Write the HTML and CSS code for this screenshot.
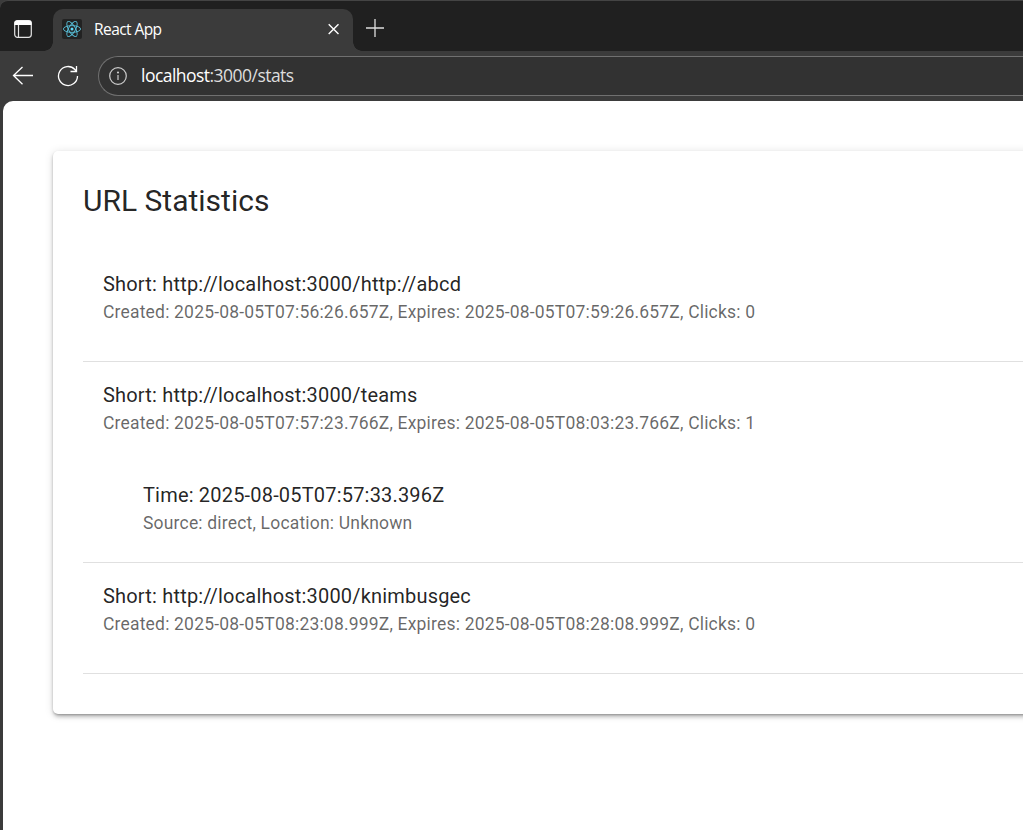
FILE: index.html
```html
<!DOCTYPE html>
<html lang="en">
<head>
<meta charset="utf-8">
<title>React App</title>
<link rel="stylesheet" href="styles.css">
</head>
<body>
<div class="browser">
  <header class="tabstrip">
    <svg class="tab-actions" width="20" height="20" viewBox="0 0 20 20" fill="none" stroke="#e4e4e4" stroke-width="1.2"><rect x="1.700" y="1.700" width="16.600" height="16.600" rx="2.800"/><path d="M2 3.500q0-1.500 1.500-1.500h13q1.500 0 1.500 1.500v2H2z" fill="#fff" stroke="#fff"/><path d="M5.500 6v12"/></svg>
    <div class="tab">
      <svg class="favicon" width="20" height="20" viewBox="0 0 20 20"><rect width="20" height="20" rx="2" fill="#222"/><g fill="none" stroke="#58bfd8" stroke-width=".9"><ellipse cx="10" cy="10" rx="8.600" ry="3.400"/><ellipse cx="10" cy="10" rx="8.600" ry="3.400" transform="rotate(60 10 10)"/><ellipse cx="10" cy="10" rx="8.600" ry="3.400" transform="rotate(120 10 10)"/></g><circle cx="10" cy="10" r="1.500" fill="#61dafb"/></svg>
      <span class="tab-title">React App</span>
      <svg class="close" width="12" height="12" viewBox="0 0 12 12" stroke="#fff" stroke-width="1.400"><path d="M.7 1.200l9.800 9.800M10.500 1.200L.7 11"/></svg>
    </div>
    <svg class="new-tab" width="18" height="18" viewBox="0 0 18 18" stroke="#ddd" stroke-width="1.300"><path d="M9 0v18M0 9h18"/></svg>
  </header>
  <nav class="toolbar">
    <svg class="back" width="22" height="20" viewBox="0 0 22 20" fill="none" stroke="#fff" stroke-width="1.300"><path d="M21 9.500H1.500M10.500 1L1.500 9.500l9 8.700"/></svg>
    <svg class="reload" width="22" height="22" viewBox="0 0 22 22" fill="none" stroke="#fff" stroke-width="1.300"><path d="M20.500 11a9.500 9.500 0 1 1-2.600-6.500l1.600 2M19.500 1v5.500h-6"/></svg>
    <div class="address">
      <svg width="18" height="18" viewBox="0 0 18 18" fill="none" stroke="#ccc" stroke-width="1.200"><circle cx="9" cy="9" r="8.300"/><path d="M9 8v5"/><circle cx="9" cy="5.500" r=".5" fill="#ccc"/></svg>
      <span class="url"><span class="host">localhost</span>:3000/stats</span>
    </div>
  </nav>
  <main class="page">
    <section class="card">
      <h1 class="title">URL Statistics</h1>
      <ul class="list">
        <li class="entry"><p class="primary">Short: http://localhost:3000/http://abcd</p><p class="secondary">Created: 2025-08-05T07:56:26.657Z, Expires: 2025-08-05T07:59:26.657Z, Clicks: 0</p></li>
        <li class="entry with-click"><p class="primary">Short: http://localhost:3000/teams</p><p class="secondary">Created: 2025-08-05T07:57:23.766Z, Expires: 2025-08-05T08:03:23.766Z, Clicks: 1</p>
          <div class="click"><p class="primary">Time: 2025-08-05T07:57:33.396Z</p><p class="secondary">Source: direct, Location: Unknown</p></div></li>
        <li class="entry"><p class="primary">Short: http://localhost:3000/knimbusgec</p><p class="secondary">Created: 2025-08-05T08:23:08.999Z, Expires: 2025-08-05T08:28:08.999Z, Clicks: 0</p></li>
      </ul>
    </section>
  </main>
</div>
</body>
</html>
```
FILE: styles.css
```css
* { box-sizing: border-box; }
body { margin: 0; font-family: Roboto, "Liberation Sans", sans-serif; background: #3b3b3b; overflow: hidden; }
p, h1, ul { margin: 0; padding: 0; }
svg { display: block; flex: none; }
.browser { width: 1023px; height: 830px; display: flex; flex-direction: column; overflow: hidden; }
.tabstrip { height: 51px; flex: none; display: flex; background: #202020; border-top: 1px solid #444; border-top-left-radius: 8px; padding: 8px 0 0 13px; }
.tab-actions { margin-top: 10px; }
.tab { position: relative; width: 300px; height: 42px; margin-left: 20px; padding: 0 13px 2px 9px; background: #3b3b3b; border-radius: 10px 10px 0 0; display: flex; align-items: center; }
.tab::before, .tab::after { content: ""; position: absolute; bottom: 0; width: 9px; height: 9px; }
.tab::before { left: -9px; background: radial-gradient(circle at 0 0, transparent 8.5px, #3b3b3b 9px); }
.tab::after { right: -9px; background: radial-gradient(circle at 100% 0, transparent 8.5px, #3b3b3b 9px); }
.tab-title { font: 15.5px "Open Sans", sans-serif; letter-spacing: -.57px; color: #fff; margin-left: 12px; flex: 1; }
.new-tab { margin: 10px 0 0 13px; }
.toolbar { height: 50px; flex: none; display: flex; align-items: center; padding-left: 12px; background: #3b3b3b; }
.reload { margin-left: 23px; }
.address { margin-left: 19px; flex: 1; height: 40px; background: #323232; border: 1px solid #707070; border-right: 0; border-radius: 20px 0 0 20px; display: flex; align-items: center; padding-left: 10px; }
.url { font: 17.5px "Open Sans", sans-serif; letter-spacing: -.53px; margin: -3px 0 0 14px; color: #ddd; }
.host { color: #fff; }
.page { flex: 1; margin-left: 3px; background: #fff; border-radius: 10px 0 0 0; padding: 50px 0 0 50px; overflow: hidden; }
.card { width: 1100px; height: 563px; padding: 29px 30px; border-radius: 5px; box-shadow: 0 4px 4px -3px rgba(0,0,0,.2), 0 3px 4px rgba(0,0,0,.14), 0 1px 10px rgba(0,0,0,.12), 0 1px 2px rgba(0,0,0,.16); }
.title { font-size: 30px; line-height: 41px; font-weight: 400; color: rgba(0,0,0,.87); }
.list { list-style: none; margin-top: 30px; }
.entry { height: 111px; padding: 18px 20px 0; border-bottom: 1px solid #e0e0e0; }
.with-click { height: 201px; }
.primary { font-size: 20px; line-height: 30px; letter-spacing: .188px; color: rgba(0,0,0,.87); }
.secondary { font-size: 17.5px; line-height: 25px; letter-spacing: .186px; margin-top: 1px; color: rgba(0,0,0,.6); }
.click { padding: 44px 40px 0; }
```
